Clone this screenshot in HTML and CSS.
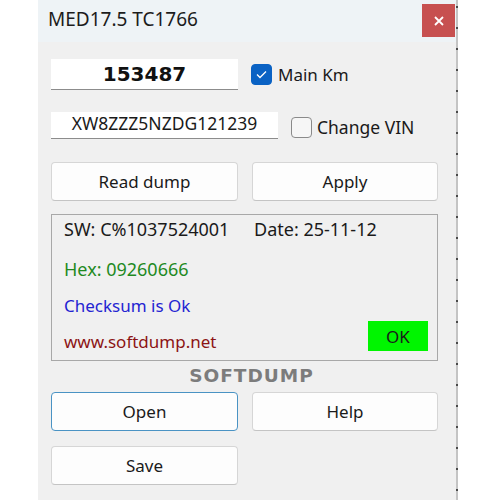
FILE: index.html
```html
<html>
<head>
<meta http-equiv="content-type" content="text/html; charset=UTF-8">
<title>MED17.5 TC1766</title>
<link rel="stylesheet" href="styles.css">
</head>
<body>
	<div class="screen">
		<div class="window">
			<div class="titlebar">
				<span class="title">MED17.5 TC1766</span>
				<a class="close" href="javascript:;">
					<svg width="10" height="10" viewBox="0 0 10 10"><path d="M1 1L9 9M9 1L1 9" stroke="#fff" stroke-width="1.8" fill="none"/></svg>
				</a>
			</div>

			<div class="content">
				<div class="row row-km">
					<div class="field field-km">153487</div>
					<label class="check">
						<span class="box on">
							<svg width="21" height="21" viewBox="0 0 21 21"><path d="M6 10.5L9 13.5L15 7.5" stroke="#fff" stroke-width="1.3" fill="none"/></svg>
						</span>
						<span class="check-text">Main Km</span>
					</label>
				</div>

				<div class="row row-vin">
					<div class="field field-vin">XW8ZZZ5NZDG121239</div>
					<label class="check check-vin">
						<span class="box"></span>
						<span class="check-text">Change VIN</span>
					</label>
				</div>

				<div class="btns mt23">
					<a class="btn" href="javascript:;">Read dump</a>
					<a class="btn" href="javascript:;">Apply</a>
				</div>

				<div class="info">
					<div class="line"><span class="sw">SW: C%1037524001</span><span>Date: 25-11-12</span></div>
					<div class="line green mt16">Hex: 09260666</div>
					<div class="line blue mt13">Checksum is Ok</div>
					<div class="line-last">
						<span class="line red">www.softdump.net</span>
						<span class="ok">OK</span>
					</div>
				</div>

				<div class="brand">SOFTDUMP</div>

				<div class="btns mt6">
					<a class="btn btn-focus" href="javascript:;">Open</a>
					<a class="btn" href="javascript:;">Help</a>
				</div>
				<div class="btns mt15">
					<a class="btn" href="javascript:;">Save</a>
				</div>
			</div>
		</div>
		<div class="edge"></div>
	</div>
</body>
</html>
```

FILE: styles.css
```css
*{margin: 0;padding: 0;box-sizing: border-box;}
body{background: #fff;font-family: "Noto Sans", "Open Sans", sans-serif;color: #1a1a1a;}
a{text-decoration: none;color: #1a1a1a;}

.screen{display: flex;padding-left: 38px;height: 500px;overflow: hidden;}
.window{width: 418px;background: #f0f0f0;}
.edge{width: 2px;background: repeating-linear-gradient(to bottom, #c4c4c4 0, #c4c4c4 6px, #4a4a4a 6px, #4a4a4a 8px, #c4c4c4 8px, #c4c4c4 21px);}

.titlebar{height: 42px;background: #eef3f6;display: flex;justify-content: space-between;align-items: flex-start;padding: 0 1px 0 10px;}
.title{margin-top: 6px;font-size: 19px;line-height: 26px;color: #1c1c1c;}
.close{margin-top: 4px;width: 33px;height: 33px;background: #c75050;display: flex;align-items: center;justify-content: center;}

.content{padding: 0 18px 0 13px;}
.row{display: flex;}
.row-km{margin-top: 17px;align-items: center;}
.row-vin{margin-top: 22px;align-items: flex-end;}

.field{background: #fff;border-bottom: 1px solid #8c8c8c;text-align: center;}
.field-km{width: 187px;height: 31px;line-height: 31px;font-family: "DejaVu Sans", sans-serif;font-weight: bold;font-size: 20px;color: #111;}
.field-vin{width: 227px;height: 27px;line-height: 23px;padding-bottom: 4px;font-size: 17.5px;}

.check{display: flex;align-items: center;margin-left: 13px;}
.box{width: 21px;height: 21px;border: 1px solid #8a8a8a;border-radius: 4px;background: #f6f6f6;display: flex;}
.box.on{background: #0a62c4;border-color: #0a62c4;}
.box svg{margin: -1px;}
.check-text{margin-left: 6px;font-size: 17px;}
.check-vin .check-text{margin-left: 5px;font-size: 17.5px;}

.btns{display: grid;grid-template-columns: 187px 186px;column-gap: 14px;}
.btn{height: 39px;display: flex;align-items: center;justify-content: center;background: #fdfdfd;border: 1px solid #d6d6d6;border-bottom-color: #c4c4c4;border-radius: 4px;font-size: 17px;}
.btn-focus{border-color: #4a93c4;}

.mt6{margin-top: 6px;}
.mt13{margin-top: 13px;}
.mt15{margin-top: 15px;}
.mt16{margin-top: 16px;}
.mt23{margin-top: 23px;}

.info{margin-top: 13px;border: 1px solid #a8a8a8;padding: 2px 9px 6px 12px;}
.line{display: block;font-size: 18px;line-height: 24px;}
.sw{display: inline-block;width: 190px;}
.green{color: #1f8a1f;}
.blue{color: #2424d2;font-size: 17px;}
.red{color: #8c1414;font-size: 17px;}
.line-last{margin-top: 3px;display: flex;justify-content: space-between;align-items: flex-end;}
.ok{width: 60px;height: 30px;margin-bottom: 3px;background: #00f500;display: flex;align-items: center;justify-content: center;font-size: 17px;}

.brand{margin-top: 5px;padding-left: 14px;text-align: center;font-family: "DejaVu Sans", sans-serif;font-weight: bold;font-size: 18.5px;line-height: 20px;letter-spacing: 1px;color: #7c7c7c;}
```
